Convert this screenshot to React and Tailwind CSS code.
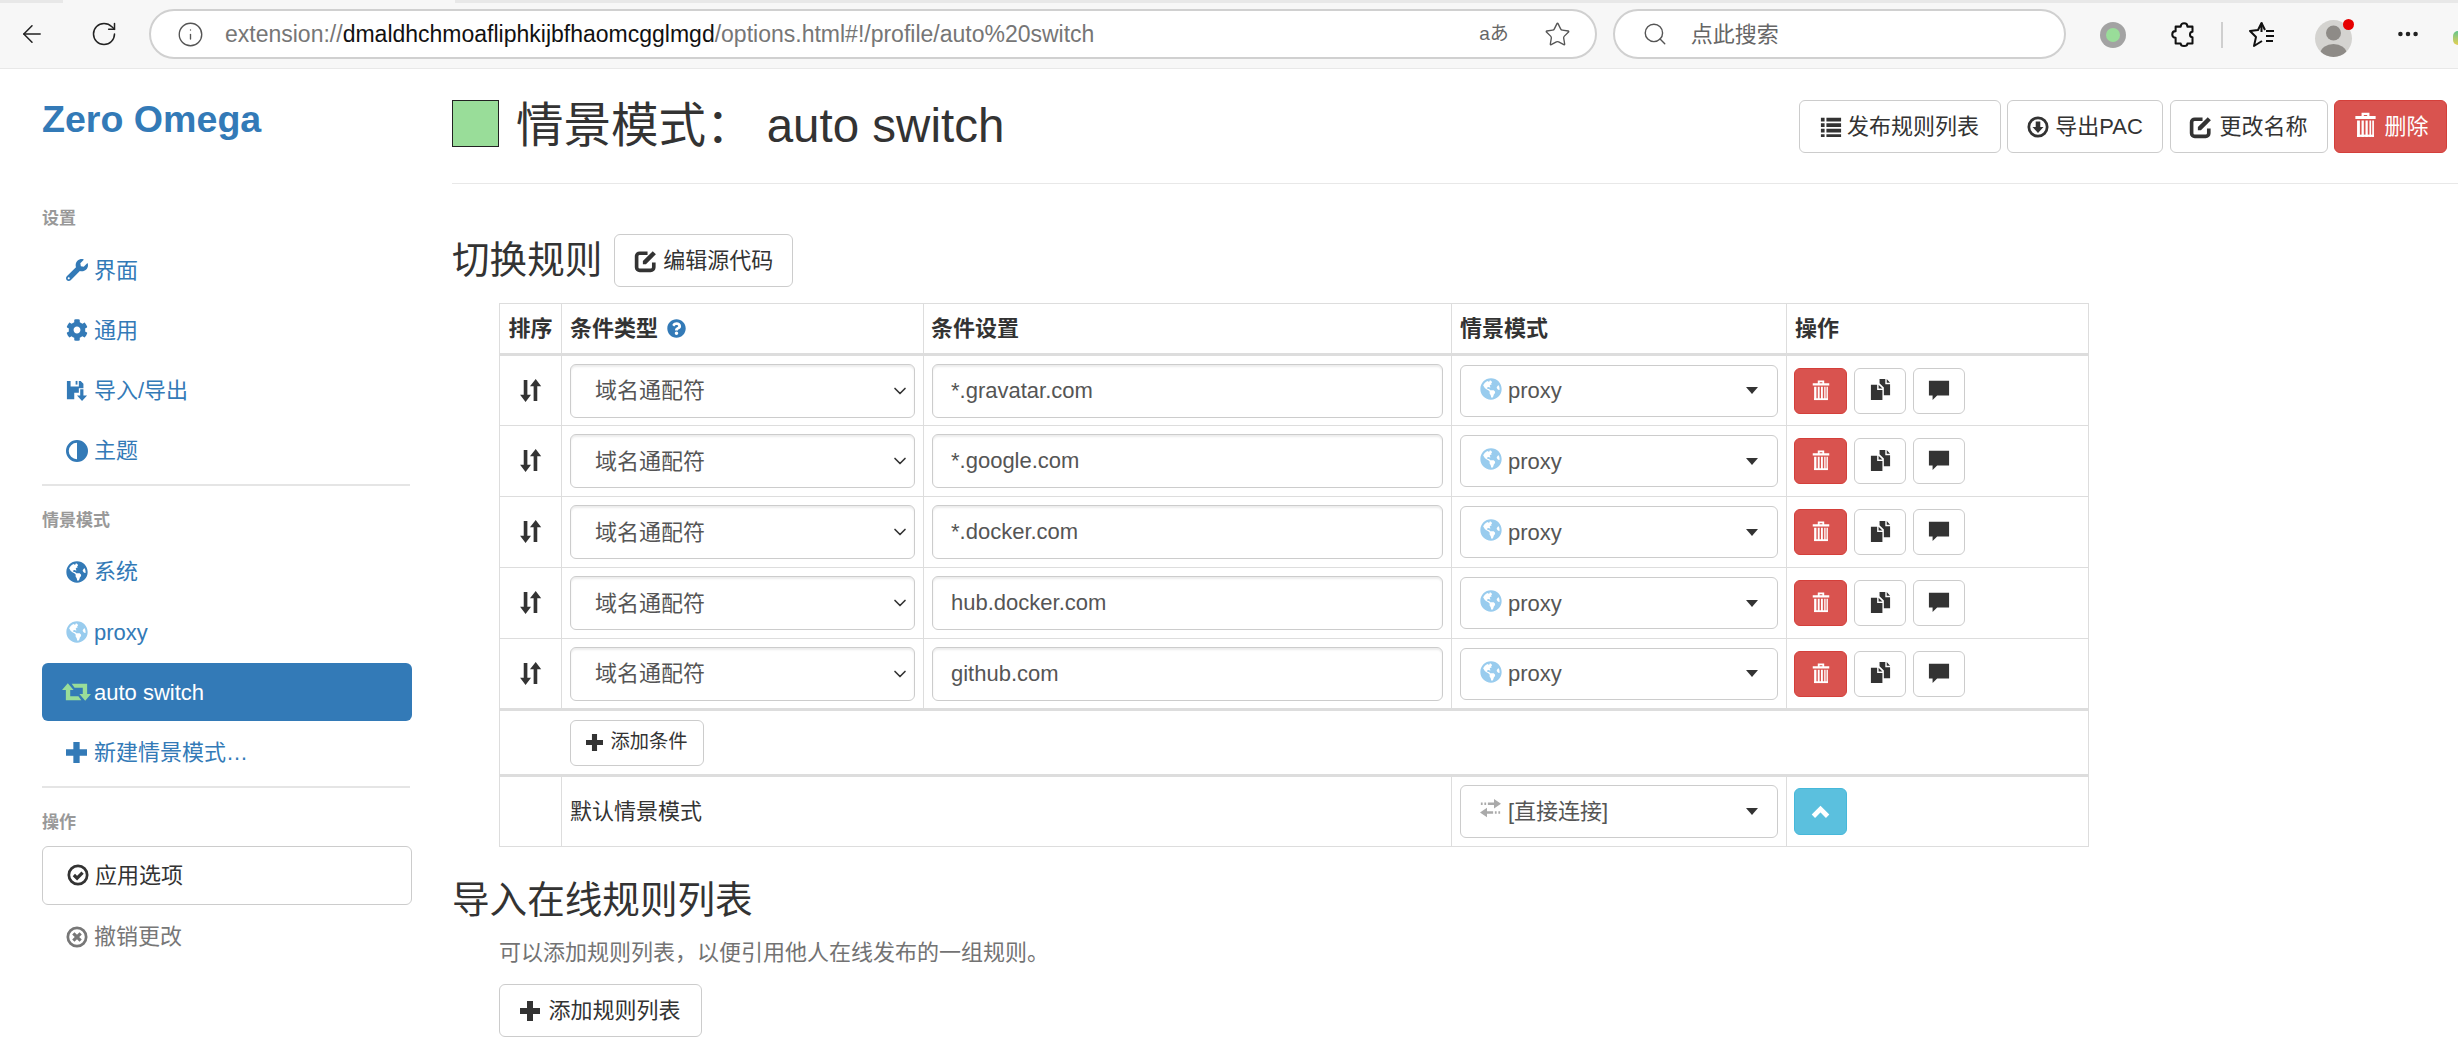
import { ArrowLeft, RotateCw, Info, Star, Search, Ellipsis, ChevronDown } from 'lucide-react';
import { FaWrench, FaCog, FaGlobeAmericas, FaQuestionCircle } from 'react-icons/fa';

const IconAdjust = ({ className }) => (
    <svg viewBox="0 0 24 24" className={className} fill="currentColor">
        <circle cx="12" cy="12" r="10.5" fill="none" stroke="currentColor" strokeWidth="3" />
        <path d="M12 2a10 10 0 0 1 0 20z" />
    </svg>
);

const IconFloppy = ({ className }) => (
    <svg viewBox="0 0 24 24" className={className} fill="currentColor">
        <path d="M1 1h4v6h9V1h2l3 3v5h-5v5H9v7H1z" />
        <path d="M10.5 1h2v4h-2z" />
        <path d="M15.5 10h3.5v7h4l-5.5 6-5.5-6h3.500z" />
    </svg>
);

const IconRetweet = ({ className }) => (
    <svg viewBox="0 0 30 18" className={className} fill="currentColor">
        <path d="M6 0l6 7H8.500v6.500H17l3 4H4V7H0z" />
        <path d="M24 18l-6-7h3.500V4.500H13l-3-4h16V11h4z" />
    </svg>
);

const IconPlus = ({ className }) => (
    <svg viewBox="2 2 20 20" className={className} fill="currentColor">
        <path d="M9 2h6v7h7v6h-7v7H9v-7H2V9h7z" />
    </svg>
);

const IconOk = ({ className }) => (
    <svg viewBox="0 0 24 24" className={className} fill="none" stroke="currentColor">
        <circle cx="12" cy="12" r="10" strokeWidth="3" />
        <path d="M7.500 12l3.500 3.500 6-6" strokeWidth="3.500" />
    </svg>
);

const IconRemove = ({ className }) => (
    <svg viewBox="0 0 24 24" className={className} fill="none" stroke="currentColor">
        <circle cx="12" cy="12" r="10" strokeWidth="3" />
        <path d="M8 8l8 8M16 8l-8 8" strokeWidth="3.500" />
    </svg>
);

const IconList = ({ className }) => (
    <svg viewBox="0 0 24 24" className={className} fill="currentColor">
        <path d="M1 2h4v4H1zM7 2h16v4H7zM1 8h4v4H1zM7 8h16v4H7zM1 14h4v4H1zM7 14h16v4H7zM1 20h4v3H1zM7 20h16v3H7z" />
    </svg>
);

const IconDownload = ({ className }) => (
    <svg viewBox="0 0 24 24" className={className} fill="currentColor">
        <circle cx="12" cy="12" r="10" fill="none" stroke="currentColor" strokeWidth="3" />
        <path d="M9.500 6h5v6h3.500L12 18.500 6 12h3.500z" />
    </svg>
);

const IconEdit = ({ className }) => (
    <svg viewBox="0 0 24 24" className={className} fill="none" stroke="currentColor">
        <path d="M19 14v4.500a3 3 0 0 1-3 3H5.500a3 3 0 0 1-3-3V8a3 3 0 0 1 3-3H13" strokeWidth="3.500" />
        <path d="M8.500 15.500v-3L18 3l3 3-9.500 9.500z" fill="currentColor" stroke="none" />
    </svg>
);

const IconTrash = ({ className }) => (
    <svg viewBox="0 0 24 24" className={className} fill="currentColor">
        <path d="M3 4.500h18v2.500H3zM8.500 4.500V1.500h7v3h-2V3.500h-3v1z" />
        <path d="M4.500 8.500h2.500V23H4.500zM8.500 8.500h2V23h-2zM12 8.500h2V23h-2zM15.500 8.500h1.500V23h-1.500zM18 8.500h1.500V23H18z" />
        <path d="M4.500 21h15v2h-15z" />
    </svg>
);

const IconSort = ({ className }) => (
    <svg viewBox="0 0 24 24" className={className} fill="currentColor">
        <path d="M5.500 2h3.500v14h3.500l-5.250 7L2 16h3.500z" />
        <path d="M17 1l5.250 7H18.500v14H15V8h-3.500z" />
    </svg>
);

const IconDuplicate = ({ className }) => (
    <svg viewBox="0 0 24 24" className={className} fill="currentColor">
        <path d="M2 7h6.500v5.500H14V23H2zM10 7l4 4h-4z" />
        <path d="M11 1h6v5.500h5V18h-6.500v-8L11 5.500zM18.500 1L22 5h-3.500z" />
    </svg>
);

const IconComment = ({ className }) => (
    <svg viewBox="0 0 24 24" className={className} fill="currentColor">
        <path d="M1 2h22v16H10l-5 5v-5H1z" />
    </svg>
);

const IconChevronUp = ({ className }) => (
    <svg viewBox="0 0 24 24" className={className} fill="none" stroke="currentColor">
        <path d="M3 18l9-9 9 9" strokeWidth="6" />
    </svg>
);

const IconTransfer = ({ className }) => (
    <svg viewBox="0 0 24 24" className={className} fill="currentColor">
        <path d="M1 5h2v3H1zM5 5h2v3H5zM9 5h7V1l8 5.500-8 5.500V8H9z" />
        <path d="M23 15h-2v3h2zM19 15h-2v3h2zM15 15H8v-4l-8 5.500L8 22v-4h7z" />
    </svg>
);

const IconFavorites = ({ className }) => (
    <svg viewBox="0 0 28 28" className={className} fill="none" stroke="#111" strokeWidth="2" strokeLinejoin="round">
        <path d="M14.500 12V3l-3.500 7-8 1 6 6-2 9 8-5" />
        <path d="M14.500 3l3.500 7M19 11h8M19 16h8M19 21h7" />
    </svg>
);

const IconExtensions = ({ className }) => (
    <svg viewBox="0 0 24 24" className={className} fill="none" stroke="#111" strokeWidth="1.800" strokeLinejoin="round">
        <path d="M9.500 5C9.500 1 15.500 1 15.500 5H20V9.500C17 9.500 17 14.500 20 14.500V20H15.500C15.500 23 9.500 23 9.500 20H5V15C1 15 1 9 5 9V5Z" />
    </svg>
);

const btn = 'inline-flex items-center justify-center rounded-[6px] border border-[#ccc] bg-white text-[#333]';

const settingsNav = [
    { name: '界面', Icon: FaWrench },
    { name: '通用', Icon: FaCog },
    { name: '导入/导出', Icon: IconFloppy },
    { name: '主题', Icon: IconAdjust },
];

const rules = ['*.gravatar.com', '*.google.com', '*.docker.com', 'hub.docker.com', 'github.com'];

const NavItem = ({ name, Icon, iconClass = 'w-[22px] h-[22px] text-[#337ab7]' }) => (
    <a className="flex h-[58px] items-center rounded-[6px] pl-[24px] text-[22px] text-[#337ab7]">
        <span className="flex w-[28px] items-center"><Icon className={iconClass} /></span>
        {name}
    </a>
);

const SideLabel = ({ children, className }) => (
    <div className={`flex h-[20px] items-center text-[17px] font-bold text-[#999] ${className}`}>{children}</div>
);

const ProfileSelect = ({ h = 'h-[52px]', icon, label }) => (
    <div className={`flex w-[318px] items-center rounded-[6px] border border-[#ccc] bg-white pl-[19px] pr-[19px] text-[22px] text-[#555] ${h}`}>
        <span className="flex w-[28px] items-center">{icon}</span>
        {label}
        <svg viewBox="0 0 12 7" className="ml-auto h-[7px] w-[12px] text-[#333]" fill="currentColor"><path d="M0 0h12L6 7z" /></svg>
    </div>
);

const Header = () => (
    <div className="flex h-[3px]">
        <div className="w-[63px] bg-[#e8e8e8]" />
        <div className="w-[392px] bg-[#f7f7f7]" />
        <div className="flex-1 bg-[#e8e8e8]" />
    </div>
);

const Toolbar = () => (
    <div className="flex h-[65px] items-start bg-[#f7f7f7] pt-[6px]">
        <div className="ml-[18px] flex h-[50px] items-center"><ArrowLeft size={28} strokeWidth={1.3} className="text-[#222]" /></div>
        <div className="ml-[44px] flex h-[50px] items-center"><RotateCw size={28} strokeWidth={1.3} className="text-[#222]" /></div>
        <div className="ml-[31px] flex h-[50px] w-[1450px] items-center rounded-full border-2 border-[#d0d0d0] bg-white pl-[26px] pr-[24px] text-[23px]">
            <Info size={27} strokeWidth={1.2} className="text-[#555]" />
            <span className="ml-[21px] text-[#767676]">extension://<span className="text-[#111]">dmaldhchmoafliphkijbfhaomcgglmgd</span>/options.html#!/profile/auto%20switch</span>
            <span className="ml-auto text-[19px] text-[#666]">aあ</span>
            <Star size={27} strokeWidth={1.2} className="ml-[35px] text-[#555]" />
        </div>
        <div className="ml-[16px] flex h-[50px] w-[454px] items-center rounded-full border-2 border-[#d0d0d0] bg-white pl-[27px] text-[22px] text-[#666]">
            <Search size={26} strokeWidth={1.3} className="text-[#555]" />
            <span className="ml-[23px]">点此搜索</span>
        </div>
        <div className="ml-[34px] mt-[13px] flex h-[26px] w-[26px] items-center justify-center rounded-full bg-[#a3a3a3]">
            <div className="h-[14px] w-[14px] rounded-full bg-[#99dd99]" />
        </div>
        <div className="ml-[44px] mt-[12px]"><IconExtensions className="h-[27px] w-[27px]" /></div>
        <div className="ml-[24px] mt-[13px] h-[26px] w-[2px] bg-[#cfcfcf]" />
        <div className="ml-[24px] mt-[11px]"><IconFavorites className="h-[28px] w-[28px]" /></div>
        <div className="relative ml-[40px] mt-[11px] flex h-[37px] w-[37px] items-center justify-center overflow-visible rounded-full bg-[#d4d3d0]">
            <svg viewBox="0 0 37 37" className="h-[37px] w-[37px] rounded-full" fill="#8e8b87">
                <circle cx="18.500" cy="13" r="7.500" />
                <ellipse cx="18.500" cy="33" rx="13" ry="9" />
            </svg>
            <div className="absolute right-[-2px] top-[-1px] h-[11px] w-[11px] rounded-full bg-[#e60000]" />
        </div>
        <div className="ml-[43px] mt-[12px]"><Ellipsis size={26} strokeWidth={2.2} className="text-[#222]" /></div>
        <div className="ml-[32px] mt-[22px] h-[14px] w-[5px] rounded-l-full bg-gradient-to-b from-[#5cc48a] to-[#e3cf4d]" />
    </div>
);

const Sidebar = () => (
    <aside className="w-[452px] shrink-0 pl-[42px] pr-[40px]">
        <div className="mt-[28px] flex h-[44px] items-center text-[37.6px] font-bold text-[#337ab7]">Zero Omega</div>

        <SideLabel className="mt-[67.500px]">设置</SideLabel>
        <nav className="mt-[12.500px] flex flex-col gap-[2.3px]">
            {settingsNav.map((item) => <NavItem key={item.name} {...item} />)}
        </nav>
        <div className="mr-[2px] mt-[4px] h-[2px] bg-[#e5e5e5]" />

        <SideLabel className="mt-[24.500px]">情景模式</SideLabel>
        <nav className="mt-[12.500px] flex flex-col gap-[2.3px]">
            <NavItem name="系统" Icon={FaGlobeAmericas} />
            <NavItem name="proxy" Icon={FaGlobeAmericas} iconClass="w-[22px] h-[22px] text-[#99ccee]" />
            <a className="flex h-[58px] items-center rounded-[6px] bg-[#337ab7] pl-[20px] text-[22px] text-white">
                <span className="flex w-[32px] items-center"><IconRetweet className="h-[18px] w-[29px] text-[#99dd99]" /></span>
                auto switch
            </a>
            <NavItem name="新建情景模式…" Icon={IconPlus} iconClass="w-[21px] h-[21px] text-[#337ab7]" />
        </nav>
        <div className="mr-[2px] mt-[4px] h-[2px] bg-[#e5e5e5]" />

        <SideLabel className="mt-[24.500px]">操作</SideLabel>
        <button className="mt-[13.500px] flex h-[59px] w-full items-center rounded-[6px] border border-[#ccc] bg-white pl-[24px] text-[22px] text-[#333]">
            <span className="flex w-[28px] items-center"><IconOk className="h-[22px] w-[22px]" /></span>
            应用选项
        </button>
        <a className="mt-[3px] flex h-[58px] items-center pl-[24px] text-[22px] text-[#777]">
            <span className="flex w-[28px] items-center"><IconRemove className="h-[22px] w-[22px]" /></span>
            撤销更改
        </a>
    </aside>
);

const RulesTable = () => (
    <table className="ml-[47px] mt-[16px] w-[1589px] table-fixed border-collapse text-[22px] text-[#333]">
        <colgroup>
            <col className="w-[62px]" />
            <col className="w-[362px]" />
            <col className="w-[528px]" />
            <col className="w-[335px]" />
            <col className="w-[302px]" />
        </colgroup>
        <thead>
            <tr className="h-[51px]">
                <th className="border border-b-[3px] border-[#ddd] text-center font-bold">排序</th>
                <th className="border border-b-[3px] border-[#ddd] pl-[8px] text-left font-bold">
                    <span className="inline-flex items-center gap-[9px]">条件类型 <FaQuestionCircle className="h-[19px] w-[19px] text-[#337ab7]" /></span>
                </th>
                <th className="border border-b-[3px] border-[#ddd] pl-[7px] text-left font-bold">条件设置</th>
                <th className="border border-b-[3px] border-[#ddd] pl-[8px] text-left font-bold">情景模式</th>
                <th className="border border-b-[3px] border-[#ddd] pl-[8px] text-left font-bold">操作</th>
            </tr>
        </thead>
        <tbody>
            {rules.map((rule) => (
                <tr key={rule} className="h-[71px]">
                    <td className="border border-[#ddd] text-center"><IconSort className="inline-block h-[25px] w-[25px] -translate-y-[2px]" /></td>
                    <td className="border border-[#ddd] px-[8px]">
                        <div className="relative">
                            <select className="h-[54px] w-full appearance-none rounded-[6px] border border-[#ccc] bg-white pl-[24px] text-[22px] text-[#555] shadow-[inset_0_2px_2px_rgba(0,0,0,0.075)]">
                                <option>域名通配符</option>
                            </select>
                            <ChevronDown size={20} strokeWidth={2} className="absolute right-[5px] top-[17px] text-[#333]" />
                        </div>
                    </td>
                    <td className="border border-[#ddd] px-[8px]">
                        <input readOnly value={rule} className="h-[54px] w-full rounded-[6px] border border-[#ccc] bg-white pl-[18px] text-[22px] text-[#555] shadow-[inset_0_2px_2px_rgba(0,0,0,0.075)]" />
                    </td>
                    <td className="border border-[#ddd] pl-[8px]">
                        <ProfileSelect label="proxy" icon={<FaGlobeAmericas className="h-[22px] w-[22px] -translate-y-[2px] text-[#99ccee]" />} />
                    </td>
                    <td className="border border-[#ddd] pl-[7px]">
                        <div className="flex gap-[7px]">
                            <button className="flex h-[46px] w-[53px] items-center justify-center rounded-[6px] border border-[#d43f3a] bg-[#d9534f] text-white"><IconTrash className="h-[22px] w-[22px] -translate-y-[1px]" /></button>
                            <button className={`${btn} h-[46px] w-[52px]`}><IconDuplicate className="h-[23px] w-[23px] -translate-y-[1px]" /></button>
                            <button className={`${btn} h-[46px] w-[52px]`}><IconComment className="h-[22px] w-[22px] -translate-y-[1px]" /></button>
                        </div>
                    </td>
                </tr>
            ))}
            <tr className="h-[66px]">
                <td colSpan={5} className="border border-t-[3px] border-[#ddd] pl-[70px]">
                    <button className={`${btn} h-[46px] w-[134px] gap-[7px] text-[19.300px]`}><IconPlus className="h-[17px] w-[17px]" />添加条件</button>
                </td>
            </tr>
            <tr className="h-[71px]">
                <td className="border border-t-[3px] border-[#ddd]" />
                <td colSpan={2} className="border border-t-[3px] border-[#ddd] pl-[8px]">默认情景模式</td>
                <td className="border border-t-[3px] border-[#ddd] pl-[8px]">
                    <ProfileSelect h="h-[53px]" label="[直接连接]" icon={<IconTransfer className="h-[21px] w-[21px] -translate-y-[3px] text-[#aaa]" />} />
                </td>
                <td className="border border-t-[3px] border-[#ddd] pl-[7px]">
                    <button className="flex h-[47px] w-[53px] items-center justify-center rounded-[6px] border border-[#46b8da] bg-[#5bc0de] text-white"><IconChevronUp className="h-[19px] w-[19px]" /></button>
                </td>
            </tr>
        </tbody>
    </table>
);

const Main = () => (
    <main className="min-w-0 flex-1 text-[#333]">
        <div className="mt-[31px] flex h-[84px] items-start border-b border-[#e8e8e8] pr-[11px]">
            <div className="h-[47px] w-[47px] border border-[#222] bg-[#99dd99]" />
            <h1 className="ml-[17px] mt-[2px] flex h-[47px] items-center text-[47.500px] font-normal">情景模式： auto switch</h1>
            <div className="ml-auto flex gap-[6.500px] text-[22px]">
                <button className={`${btn} h-[53px] w-[202px] gap-[5px]`}><IconList className="h-[22px] w-[22px]" />发布规则列表</button>
                <button className={`${btn} h-[53px] w-[156px] gap-[6px]`}><IconDownload className="h-[22px] w-[22px]" />导出PAC</button>
                <button className={`${btn} h-[53px] w-[158px] gap-[5px]`}><IconEdit className="h-[25px] w-[25px]" />更改名称</button>
                <button className="inline-flex h-[53px] w-[113px] items-center justify-center gap-[5px] rounded-[6px] border border-[#d43f3a] bg-[#d9534f] text-white"><IconTrash className="h-[27px] w-[27px] -translate-y-[2px]" />删除</button>
            </div>
        </div>

        <div className="mt-[50px] flex h-[53px] items-center">
            <h2 className="text-[37.600px] font-normal">切换规则</h2>
            <button className={`${btn} ml-[12px] h-[53px] w-[179px] gap-[4px] text-[22px]`}><IconEdit className="h-[25px] w-[25px]" />编辑源代码</button>
        </div>

        <RulesTable />

        <h2 className="mt-[33px] flex h-[40px] items-center text-[37.600px] font-normal">导入在线规则列表</h2>
        <p className="ml-[47px] mt-[20px] flex h-[24px] items-center text-[22px] text-[#737373]">可以添加规则列表，以便引用他人在线发布的一组规则。</p>
        <button className={`${btn} ml-[47px] mt-[20px] h-[53px] w-[203px] gap-[8px] text-[22px]`}><IconPlus className="h-[20px] w-[20px]" />添加规则列表</button>
    </main>
);

export default function App() {
    return (
        <div className="h-[1060px] overflow-hidden bg-white font-['Liberation_Sans','Noto_Sans_CJK_SC',sans-serif]">
            <Header />
            <Toolbar />
            <div className="flex border-t border-[#e8e8e8]">
                <Sidebar />
                <Main />
            </div>
        </div>
    );
}
